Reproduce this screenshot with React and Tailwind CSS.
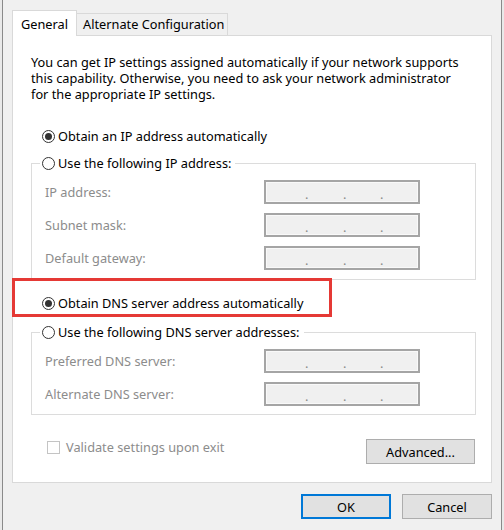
import React from "react";

const Radio = ({ checked, label }) => (
  <div className="flex items-center h-[16px]">
    <span className="w-[13px] h-[13px] rounded-full border border-[#333333] bg-white flex items-center justify-center">
      {checked ? <span className="w-[7px] h-[7px] rounded-full bg-[#333333]" /> : null}
    </span>
    <span className="ml-[3px] leading-[16px] whitespace-nowrap">{label}</span>
  </div>
);

const IpBox = () => (
  <div className="w-[156px] h-[24px] border-2 border-[#a5a5a5] bg-[#f0f0f0] shadow-[inset_0_0_0_1px_#f9f9f9] flex items-end pb-[1px] text-[#8a8a8a] leading-[14px]">
    <span className="w-[39px]" />
    <span className="w-[3px] text-center">.</span>
    <span className="w-[35px]" />
    <span className="w-[3px] text-center">.</span>
    <span className="w-[34px]" />
    <span className="w-[3px] text-center">.</span>
  </div>
);

const FieldRow = ({ label }) => (
  <div className="flex items-center h-[24px] pl-[5px]">
    <span className="w-[219px] text-[#8c8c8c] leading-[16px]">{label}</span>
    <IpBox />
  </div>
);

const Group = ({ legend, rows, pb }) => (
  <fieldset className={`border border-[#dcdcdc] pl-[8px] ${pb}`}>
    <legend className="bg-white pl-[2px] pr-[4px]">
      <Radio label={legend} />
    </legend>
    <div className="mt-[9px] flex flex-col gap-[9px]">
      {rows.map((r) => (
        <FieldRow key={r} label={r} />
      ))}
    </div>
  </fieldset>
);

const App = () => {
  return (
    <div className="w-[504px] h-[530px] bg-[#e9e9e9] pl-[2px] font-['Noto_Sans',sans-serif] text-[12.75px] text-black overflow-hidden">
      <div className="w-[500px] h-full border-x border-[#8a8a8a] bg-[#f0f0f0] pl-[9px] pt-[10px]">
        {/* tabs */}
        <div className="flex items-end h-[26px] -mb-[1px] relative z-10">
          <div className="w-[65px] h-[26px] bg-white border border-b-0 border-[#d9d9d9] pl-[8px] pt-[5px] leading-[16px]">
            General
          </div>
          <div className="w-[151px] h-[22px] mb-[1px] bg-[#f0f0f0] border border-l-0 border-b-0 border-[#d9d9d9] pl-[6px] pt-[2px] leading-[16px] whitespace-nowrap">
            Alternate Configuration
          </div>
        </div>

        {/* panel */}
        <div className="relative w-[480px] h-[448px] bg-white border border-[#d9d9d9] pl-[18px] pr-[15px] pt-[18px] flex flex-col">
          <p className="leading-[16px] whitespace-nowrap">
            You can get IP settings assigned automatically if your network supports
            <br />
            this capability. Otherwise, you need to ask your network administrator
            <br />
            for the appropriate IP settings.
          </p>

          <div className="mt-[26px] ml-[11px]">
            <Radio checked label="Obtain an IP address automatically" />
          </div>

          <div className="mt-[11px]">
            <Group
              legend="Use the following IP address:"
              rows={["IP address:", "Subnet mask:", "Default gateway:"]}
              pb="pb-[9px]"
            />
          </div>

          <div className="mt-[15px] ml-[11px]">
            <Radio checked label="Obtain DNS server address automatically" />
          </div>

          <div className="mt-[13px]">
            <Group
              legend="Use the following DNS server addresses:"
              rows={["Preferred DNS server:", "Alternate DNS server:"]}
              pb="pb-[8px]"
            />
          </div>

          <div className="mt-[24px] flex justify-between items-start">
            <div className="ml-[16px] flex items-center h-[16px]">
              <span className="w-[13px] h-[13px] border border-[#c4c4c4] bg-white" />
              <span className="ml-[6px] text-[#8c8c8c] leading-[16px]">Validate settings upon exit</span>
            </div>
            <button className="mr-[1px] w-[109px] h-[25px] bg-[#e1e1e1] border border-[#adadad] leading-[16px]">
              Advanced...
            </button>
          </div>

          {/* highlight annotation */}
          <div className="absolute left-[-1px] top-[242px] w-[320px] h-[39px] border-[3px] border-[#e53935]" />
        </div>

        {/* dialog buttons */}
        <div className="w-[480px] mt-[11px] flex justify-end gap-[11px]">
          <button className="w-[90px] h-[25px] bg-[#e1e1e1] border-2 border-[#0078d7] leading-[16px]">OK</button>
          <button className="w-[90px] h-[25px] bg-[#e1e1e1] border border-[#adadad] leading-[16px]">Cancel</button>
        </div>
      </div>
    </div>
  );
};

export default App;
